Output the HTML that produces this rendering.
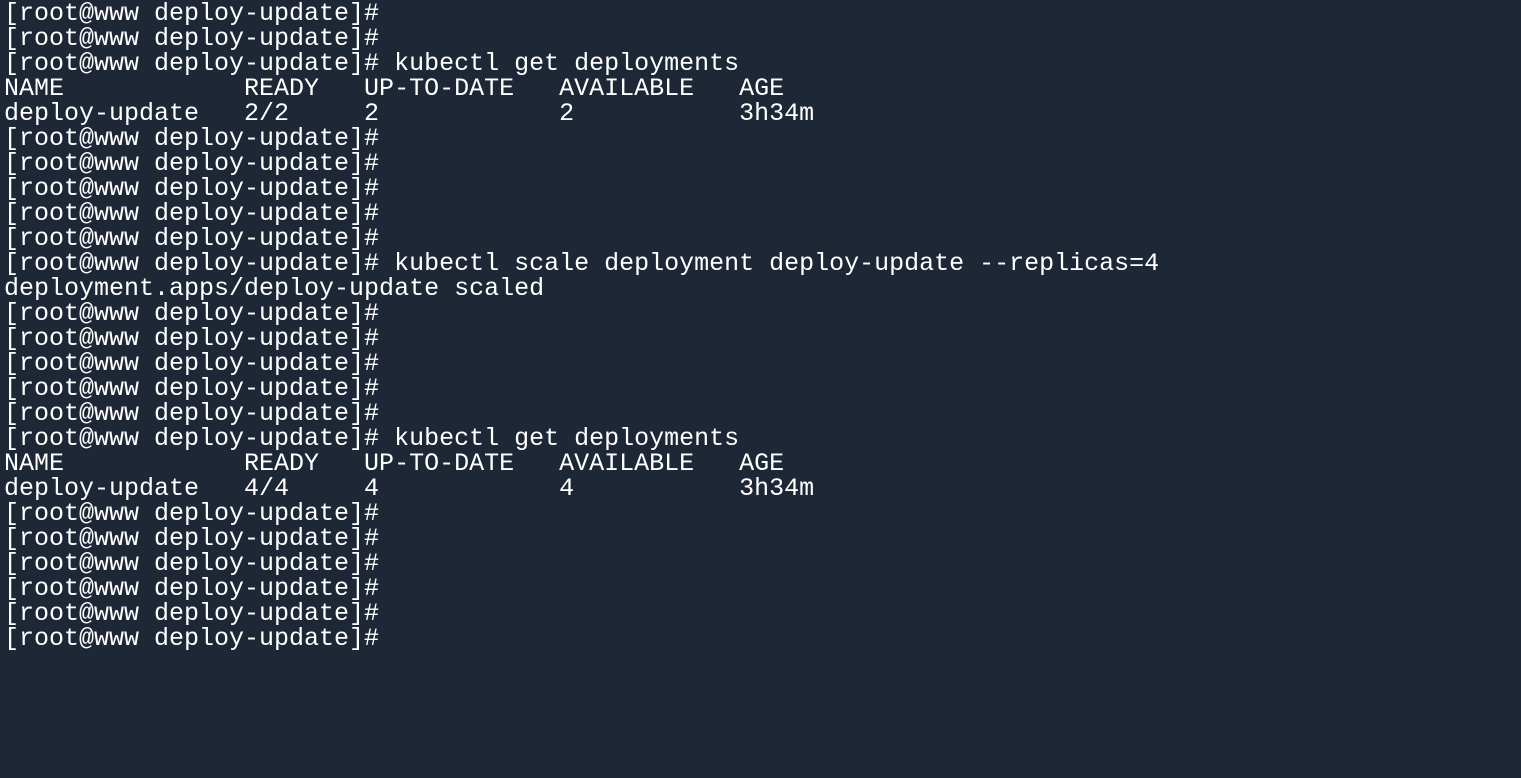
<!DOCTYPE html>
<html><head><style>
html,body{margin:0;padding:0;background:#1d2736;width:1521px;height:778px;overflow:hidden}
pre{margin:0;padding:0 0 0 4px;color:#fff;font-family:"Liberation Mono",monospace;font-size:25px;line-height:25px;position:relative;top:1px}
</style></head><body><pre>[root@www deploy-update]#
[root@www deploy-update]#
[root@www deploy-update]# kubectl get deployments
NAME            READY   UP-TO-DATE   AVAILABLE   AGE
deploy-update   2/2     2            2           3h34m
[root@www deploy-update]#
[root@www deploy-update]#
[root@www deploy-update]#
[root@www deploy-update]#
[root@www deploy-update]#
[root@www deploy-update]# kubectl scale deployment deploy-update --replicas=4
deployment.apps/deploy-update scaled
[root@www deploy-update]#
[root@www deploy-update]#
[root@www deploy-update]#
[root@www deploy-update]#
[root@www deploy-update]#
[root@www deploy-update]# kubectl get deployments
NAME            READY   UP-TO-DATE   AVAILABLE   AGE
deploy-update   4/4     4            4           3h34m
[root@www deploy-update]#
[root@www deploy-update]#
[root@www deploy-update]#
[root@www deploy-update]#
[root@www deploy-update]#
[root@www deploy-update]#</pre></body></html>
